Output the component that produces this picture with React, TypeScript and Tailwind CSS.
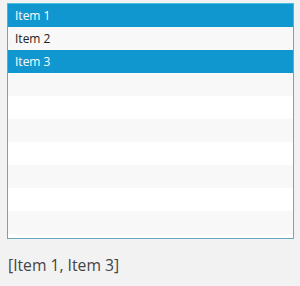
import React from "react";

const rows = ["Item 1", "Item 2", "Item 3", "", "", "", "", "", "", "", ""];
const selected = [0, 2];

export default function App() {
  return (
    <div className="w-[300px] h-[286px] bg-[#f2f2f2] pt-[3px] pl-[7px]" style={{ fontFamily: '"Open Sans", "Noto Sans", sans-serif' }}>
      <div className="w-[287px] h-[236px] border border-[#6aa9bb] border-t-[#4cbfe0] bg-white overflow-hidden">
        {rows.map((r, i) => {
          const sel = selected.includes(i);
          const bg = sel ? "bg-[#1197d0] text-white" : i % 2 === 1 ? "bg-[#f8f8f8] text-[#222]" : "bg-white text-[#222]";
          return (
            <div key={i} className={`h-[23px] flex items-center pl-[7px] text-[12px] ${bg}`}>
              {r}
            </div>
          );
        })}
      </div>
      <div className="mt-[16px] text-[15.7px] text-[#444] leading-[20px] pl-[1px]">[Item 1, Item 3]</div>
    </div>
  );
}
